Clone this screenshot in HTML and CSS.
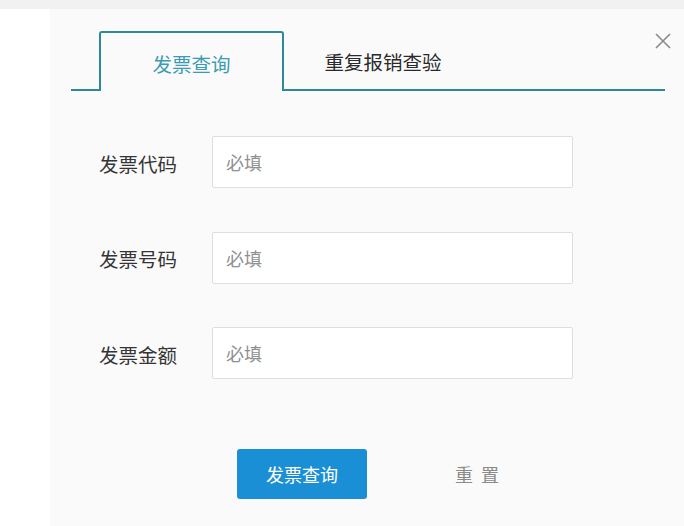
FILE: index.html
```html
<!DOCTYPE html>
<html lang="zh-CN">
<head>
<meta charset="utf-8">
<title>发票查询</title>
<link rel="stylesheet" href="styles.css">
</head>
<body>
<div class="topbar"></div>
<div class="main">
  <div class="gutter"></div>
  <div class="panel">
    <button class="close" aria-label="关闭">
      <svg width="16" height="16" viewBox="0 0 16 16"><path d="M1 1L15 15M15 1L1 15" stroke="#8a8a8a" stroke-width="1.6" fill="none"/></svg>
    </button>
    <div class="tabs">
      <div class="tab-lead"></div>
      <div class="tab active">发票查询</div>
      <div class="tab">重复报销查验</div>
      <div class="tab-rest"></div>
    </div>
    <form class="form">
      <div class="row">
        <label class="label">发票代码</label>
        <input class="field" type="text" placeholder="必填">
      </div>
      <div class="row">
        <label class="label">发票号码</label>
        <input class="field" type="text" placeholder="必填">
      </div>
      <div class="row">
        <label class="label">发票金额</label>
        <input class="field" type="text" placeholder="必填">
      </div>
      <div class="actions">
        <button type="button" class="btn-primary">发票查询</button>
        <button type="button" class="btn-reset">重置</button>
      </div>
    </form>
  </div>
</div>
</body>
</html>
```
FILE: styles.css
```css
* { box-sizing: border-box; }
html, body {
  margin: 0;
  padding: 0;
  background: #ffffff;
  font-family: "Noto Sans CJK SC", "Noto Sans", sans-serif;
}
.topbar {
  height: 9px;
  background: #f1f1f1;
}
.main {
  display: flex;
  height: 517px;
}
.gutter {
  width: 50px;
  background: #ffffff;
}
.panel {
  flex: 1;
  background: #fafafa;
  position: relative;
}
.close {
  position: absolute;
  top: 24px;
  left: 605px;
  width: 16px;
  height: 16px;
  padding: 0;
  border: 0;
  background: transparent;
  display: flex;
}
.tabs {
  display: flex;
  height: 60px;
  margin: 22px 0 0 21px;
  width: 594px;
}
.tab-lead {
  width: 28px;
  border-bottom: 2px solid #2f8898;
}
.tab {
  display: flex;
  align-items: center;
  justify-content: center;
  font-size: 19.5px;
  color: #2a2a2a;
  width: 198px;
  border-bottom: 2px solid #2f8898;
  padding-top: 2px;
}
.tab.active {
  width: 185px;
  color: #3a9bb2;
  border: 2px solid #2f8898;
  border-bottom: 0;
  border-radius: 3px 3px 0 0;
}
.tab-rest {
  flex: 1;
  border-bottom: 2px solid #2f8898;
}
.form {
  padding: 45px 0 0 49px;
  display: flex;
  flex-direction: column;
  gap: 43.5px;
}
.row {
  display: flex;
  align-items: center;
}
.label {
  width: 113px;
  font-size: 19.5px;
  color: #353535;
  padding-top: 2px;
}
.field {
  width: 361px;
  height: 52px;
  border: 1px solid #dedede;
  border-radius: 2px;
  background: #ffffff;
  padding: 0 0 0 13px;
  font-family: inherit;
  font-size: 18px;
  color: #333;
  outline: none;
}
.field::placeholder {
  color: #8f8f8f;
}
.actions {
  display: flex;
  align-items: center;
  margin-top: 26px;
  padding-left: 138px;
}
.btn-primary {
  width: 130px;
  height: 50px;
  border: 0;
  border-radius: 3px;
  background: #1b8fd6;
  color: #ffffff;
  font-family: inherit;
  font-size: 18px;
  padding: 0;
}
.btn-reset {
  margin-left: 88px;
  border: 0;
  background: transparent;
  padding: 0;
  font-family: inherit;
  font-size: 18px;
  letter-spacing: 8px;
  color: #8a8a8a;
}
```
